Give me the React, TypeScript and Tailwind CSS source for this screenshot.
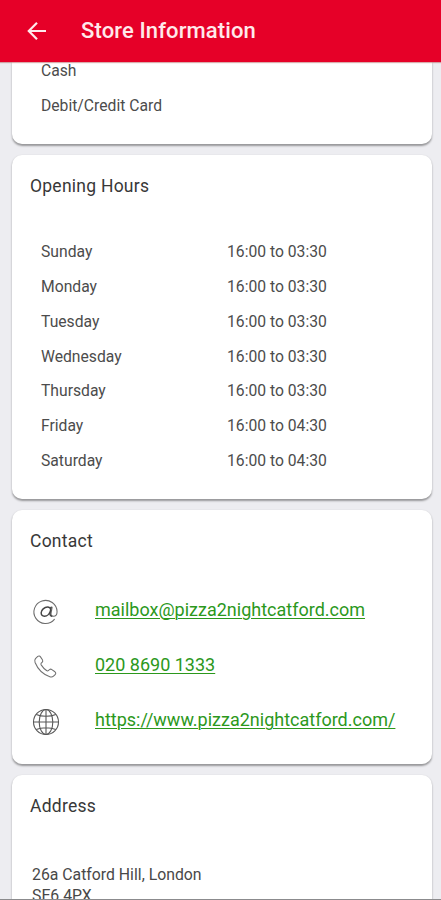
import type { ReactNode } from "react";

const hours = [
  ["Sunday", "16:00 to 03:30"],
  ["Monday", "16:00 to 03:30"],
  ["Tuesday", "16:00 to 03:30"],
  ["Wednesday", "16:00 to 03:30"],
  ["Thursday", "16:00 to 03:30"],
  ["Friday", "16:00 to 04:30"],
  ["Saturday", "16:00 to 04:30"],
];

function AtIcon() {
  return (
    <svg width="27" height="27" viewBox="0 0 28 28" fill="none" stroke="#6c6c6c" strokeWidth="1.1" strokeLinecap="round">
      <path d="M23.2 22.2A12 12 0 1 1 26 14.2c0 3-1.600 4.700-3.700 4.700-2 0-2.900-1.200-2.500-3.200l1.100-6.200" />
      <path strokeWidth="1.5" stroke="#444" d="M19.600 12.500c-.4-2-1.700-3.100-3.500-3.100-3.200 0-6.600 3-6.600 6 0 2.200 1.500 3.500 3.400 3.500 2.800 0 5.600-2.700 6.400-6.400l.6-3M19 14c-.6 3-.4 4.800 1.500 4.900" />
    </svg>
  );
}

function PhoneIcon() {
  return (
    <svg width="27" height="27" viewBox="0 0 28 28" fill="none" stroke="#707070" strokeWidth="1.1" strokeLinejoin="round">
      <path d="M3.600 5.800 6 3.600c.9-.8 2.100-.6 2.800.4l2 3c.6.9.5 1.800-.3 2.600l-1 1c-.4.5-.4 1 0 1.700 1.500 2.300 3.300 4.300 5.600 5.900.7.500 1.300.500 1.800.1l1.200-1c.8-.7 1.700-.7 2.500-.1l3.200 2.300c1 .8 1.100 1.900.2 2.800l-1.700 1.700c-1 1-2.300 1.200-3.800.7C11.500 22.200 6 16.800 3.200 9.900c-.6-1.600-.5-3 .4-4.100Z" />
    </svg>
  );
}

function GlobeIcon() {
  return (
    <svg width="28" height="28" viewBox="0 0 28 28" fill="none" stroke="#585858" strokeWidth="1.1">
      <circle cx="14" cy="14" r="12.500" />
      <ellipse cx="14" cy="14" rx="6.800" ry="12.500" />
      <path d="M14 1.500v25M1.500 14h25M4.200 6.500c5.500 2.400 14.100 2.400 19.600 0M4.200 21.500c5.500-2.400 14.100-2.400 19.600 0" />
    </svg>
  );
}

function Card({ title, className, children }: { title?: string; className: string; children: ReactNode }) {
  return (
    <section className={`w-[420px] shrink-0 rounded-[10px] bg-white shadow-[0_1.5px_2px_rgba(0,0,0,0.36)] ${className}`}>
      {title && <h2 className="pl-[18px] pt-[19px] text-[17.500px] leading-6 tracking-[0.25px] text-[#383838]">{title}</h2>}
      {children}
    </section>
  );
}

function ContactRow({ icon, href, text }: { icon: ReactNode; href: string; text: string }) {
  return (
    <div className="flex h-[55px] items-center pl-5">
      <span className="mt-1 w-[63px]">{icon}</span>
      <a href={href} className="text-[18px] leading-6 text-[#2c981c] underline decoration-1 underline-offset-2">
        {text}
      </a>
    </div>
  );
}

export default function App() {
  return (
    <div className="flex h-[900px] w-[441px] flex-col overflow-hidden border-b border-[#8b8b8d] bg-[#ededf1] font-[Roboto,sans-serif]">
      <header className="z-10 flex h-[62px] shrink-0 items-center bg-[#e60028] pl-[27px] text-[#ffe9eb] shadow-[0_1px_1px_rgba(170,70,70,0.45)]">
        <svg width="20" height="20" viewBox="0 0 20 20" fill="none" stroke="currentColor" strokeWidth="2.200">
          <path d="M19 10H2.500M10 1.800 1.800 10l8.200 8.200" />
        </svg>
        <h1 className="ml-[34px] text-[22px] font-medium leading-7 tracking-[0.12px]">Store Information</h1>
      </header>
      <main className="flex min-h-0 flex-1 flex-col gap-[11px] overflow-hidden pl-3">
        <Card className="h-[82px] rounded-t-none pl-[29px] text-[15.700px] text-[#4c4c4c]">
          <p className="-mt-[9px] h-[35px] leading-[35px]">Cash</p>
          <p className="h-[35px] leading-[35px]">Debit/Credit Card</p>
        </Card>
        <Card title="Opening Hours" className="h-[344px]">
          <dl className="pt-[36.500px] text-[15.700px] text-[#4c4c4c]">
            {hours.map(([day, time]) => (
              <div key={day} className="flex h-[34.800px] items-center pl-[29px]">
                <dt className="w-[186px]">{day}</dt>
                <dd>{time}</dd>
              </div>
            ))}
          </dl>
        </Card>
        <Card title="Contact" className="h-[254px]">
          <div className="pt-[29px]">
            <ContactRow icon={<AtIcon />} href="mailto:mailbox@pizza2nightcatford.com" text="mailbox@pizza2nightcatford.com" />
            <ContactRow icon={<PhoneIcon />} href="tel:02086901333" text="020 8690 1333" />
            <ContactRow icon={<GlobeIcon />} href="https://www.pizza2nightcatford.com/" text="https://www.pizza2nightcatford.com/" />
          </div>
        </Card>
        <Card title="Address" className="h-[160px]">
          <p className="pl-5 pt-[46px] text-[15.800px] leading-[21px] text-[#484848]">
            26a Catford Hill, London
            <br />
            SE6 4PX
          </p>
        </Card>
      </main>
    </div>
  );
}
